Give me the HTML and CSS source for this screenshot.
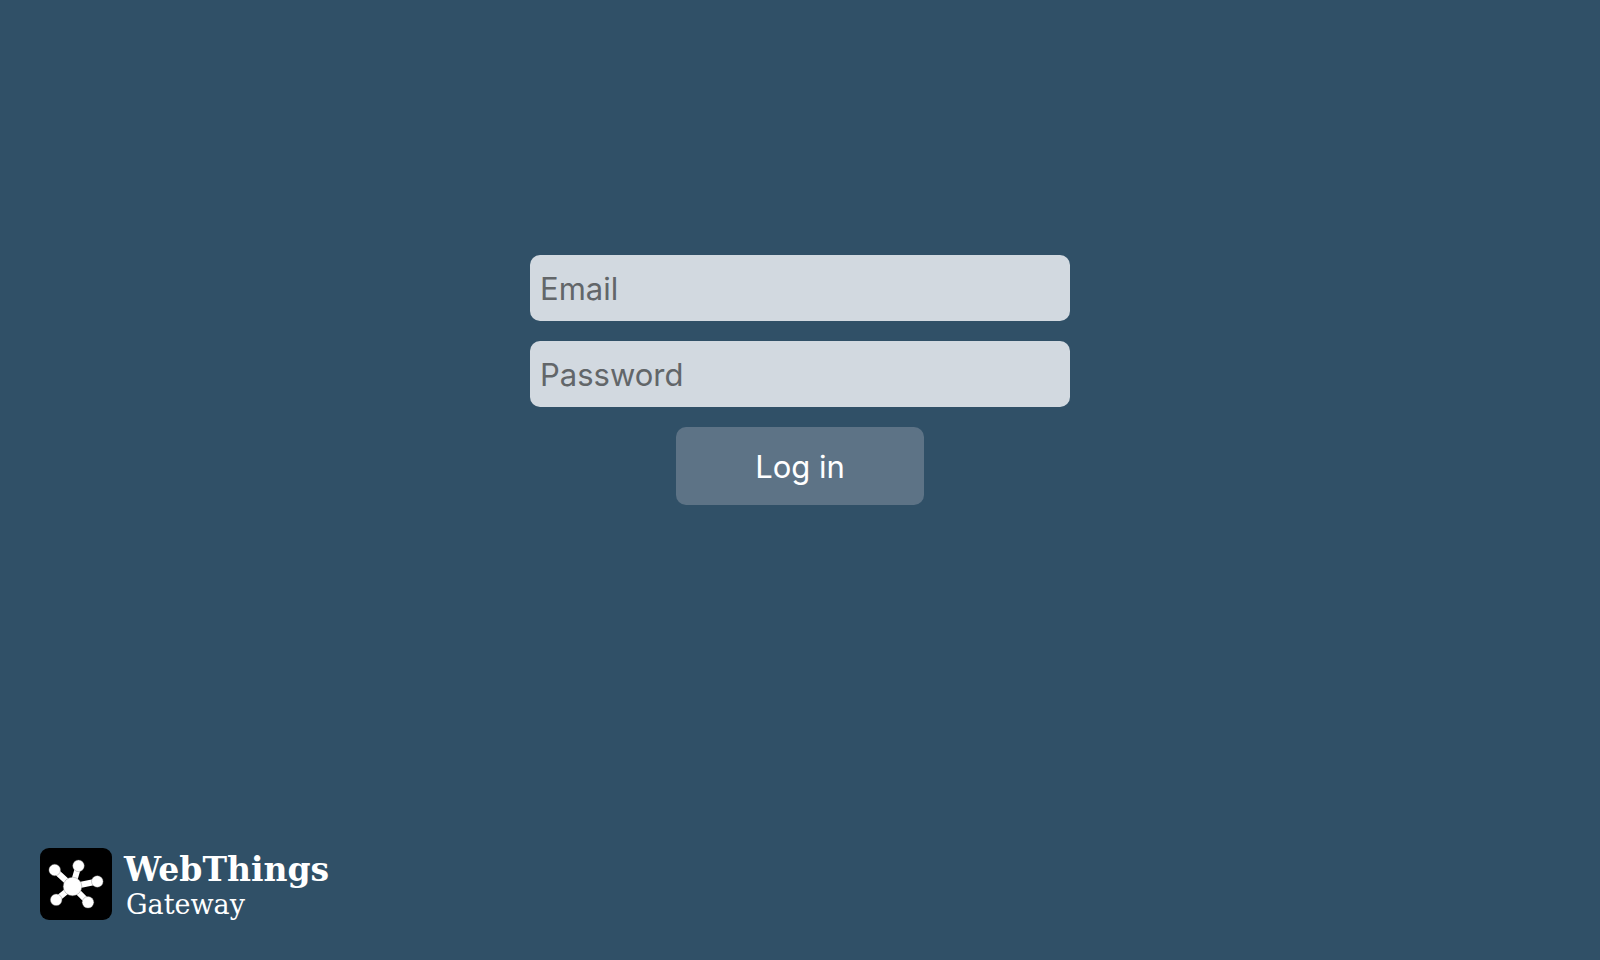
FILE: index.html
```html
<!DOCTYPE html>
<html lang="en">
<head>
<meta charset="utf-8">
<meta name="viewport" content="width=device-width, initial-scale=1">
<title>Log in | WebThings Gateway</title>
<link rel="stylesheet" href="styles.css">
</head>
<body class="page">
<main class="login">
  <form class="login-form">
    <input class="field" type="email" name="email" placeholder="Email" aria-label="Email">
    <input class="field" type="password" name="password" placeholder="Password" aria-label="Password">
    <button class="submit" type="submit">Log in</button>
  </form>
</main>
<footer class="brand">
  <svg class="brand-icon" viewBox="0 0 72 72" aria-hidden="true">
    <rect width="72" height="72" rx="9"/>
    <g stroke="#fff" stroke-width="6">
      <path d="M32.5 38.5L14.5 22M32.5 38.5L38.5 18M32.5 38.5L57 33.5M32.5 38.5L16 52M32.5 38.5L48 54"/>
    </g>
    <g fill="#fff" stroke="#777" stroke-width=".4">
      <circle cx="32.5" cy="38.5" r="9.3"/>
      <circle cx="14.7" cy="22" r="5.8"/>
      <circle cx="38.5" cy="17.8" r="5.8"/>
      <circle cx="57.3" cy="33.5" r="5.8"/>
      <circle cx="16.2" cy="51.8" r="5.8"/>
      <circle cx="48" cy="54.3" r="5.8"/>
    </g>
  </svg>
  <div class="brand-text">
    <span class="brand-name">WebThings</span>
    <span class="brand-product">Gateway</span>
  </div>
</footer>
</body>
</html>
```
FILE: styles.css
```css
* {
  box-sizing: border-box;
}

.page {
  display: flex;
  flex-direction: column;
  min-height: 100vh;
  margin: 0;
  background: #305067;
  color: #fff;
  font-family: Inter, "Liberation Sans", sans-serif;
}

.login {
  display: flex;
  flex: 1;
  align-items: center;
  justify-content: center;
  padding: 0 20px;
}

.login-form {
  display: flex;
  flex-direction: column;
  align-items: center;
  gap: 20px;
  width: 100%;
  max-width: 540px;
}

.field {
  width: 100%;
  padding: 14px 10px 12px;
  border: 0;
  border-radius: 10px;
  background: #d2d9e0;
  color: #333;
  font: 31px/40px Inter, "Liberation Sans", sans-serif;
}

.field::placeholder {
  color: #626669;
  opacity: 1;
}

.submit {
  padding: 20px 79px 18px;
  border: 0;
  border-radius: 10px;
  background: #5d7386;
  color: #fff;
  font: 31px/40px Inter, "Liberation Sans", sans-serif;
}

.brand {
  display: flex;
  gap: 12px;
  padding: 88px 40px 40px;
}

.brand-icon {
  width: 72px;
  height: 72px;
}

.brand-text {
  display: flex;
  flex-direction: column;
  font-family: "DejaVu Serif", serif;
}

.brand-name {
  font-size: 33px;
  font-weight: 700;
  line-height: 44px;
}

.brand-product {
  padding-left: 2px;
  font-size: 27px;
  line-height: 26px;
}
```
